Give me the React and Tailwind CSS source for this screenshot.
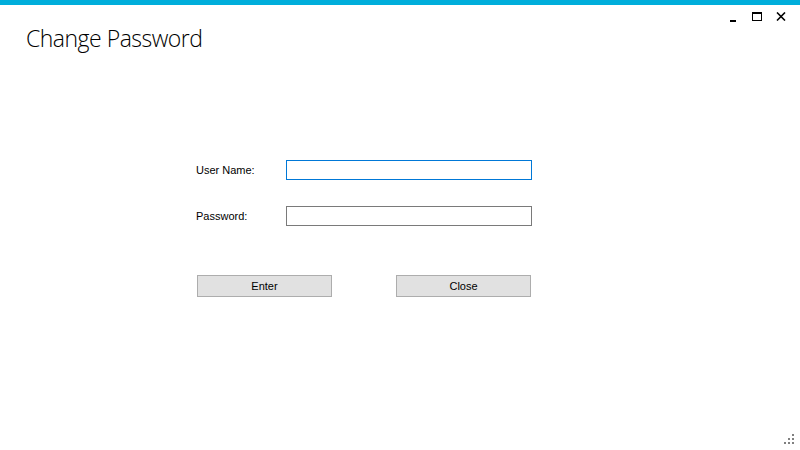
import React from "react";

export default function App() {
  return (
    <div className="w-[800px] h-[450px] bg-white flex flex-col relative overflow-hidden" style={{ fontFamily: '"Liberation Sans", Arial, sans-serif' }}>
      <div className="h-[5px] bg-[#00AEDB] shrink-0" />
      <div className="h-[55px] flex justify-between items-start shrink-0">
        <div className="pl-[26px] pt-[19px] text-[23px] leading-[28px] font-light tracking-[-0.5px] text-[#000]" style={{ fontFamily: '"Open Sans", "Noto Sans", sans-serif' }}>
          Change Password
        </div>
        <div className="flex items-start pt-[7px] pr-[14px] gap-[14px]">
          <div className="w-[10px] h-[9px] flex items-end justify-center">
            <div className="w-[6px] h-[2px] bg-black mb-[-1px]" />
          </div>
          <div className="w-[10px] h-[9px] border border-black border-t-2" />
          <svg width="10" height="9" viewBox="0 0 10 9">
            <path d="M1 0.5 L9 8.5 M9 0.5 L1 8.5" stroke="black" strokeWidth="1.6" />
          </svg>
        </div>
      </div>
      <div className="ml-[196px] mt-[100px] flex flex-col">
        <div className="flex items-center h-[20px]">
          <div className="w-[90px] text-[11px] text-black">User Name:</div>
          <div className="w-[246px] h-[20px] border border-[#0078D7] bg-white" />
        </div>
        <div className="flex items-center h-[20px] mt-[26px]">
          <div className="w-[90px] text-[11px] text-black">Password:</div>
          <div className="w-[246px] h-[20px] border border-[#7A7A7A] bg-white" />
        </div>
        <div className="flex mt-[49px] ml-[1px] gap-[64px]">
          <div className="w-[135px] h-[22px] pt-[1px] border border-[#ADADAD] bg-[#E1E1E1] flex items-center justify-center text-[11px] text-black">Enter</div>
          <div className="w-[135px] h-[22px] pt-[1px] border border-[#ADADAD] bg-[#E1E1E1] flex items-center justify-center text-[11px] text-black">Close</div>
        </div>
      </div>
      <svg width="12" height="12" viewBox="0 0 12 12" className="absolute right-[4px] bottom-[4px]">
        <rect x="8" y="0" width="2" height="2" fill="#808080" />
        <rect x="4" y="4" width="2" height="2" fill="#808080" />
        <rect x="8" y="4" width="2" height="2" fill="#808080" />
        <rect x="0" y="8" width="2" height="2" fill="#808080" />
        <rect x="4" y="8" width="2" height="2" fill="#808080" />
        <rect x="8" y="8" width="2" height="2" fill="#808080" />
      </svg>
    </div>
  );
}
